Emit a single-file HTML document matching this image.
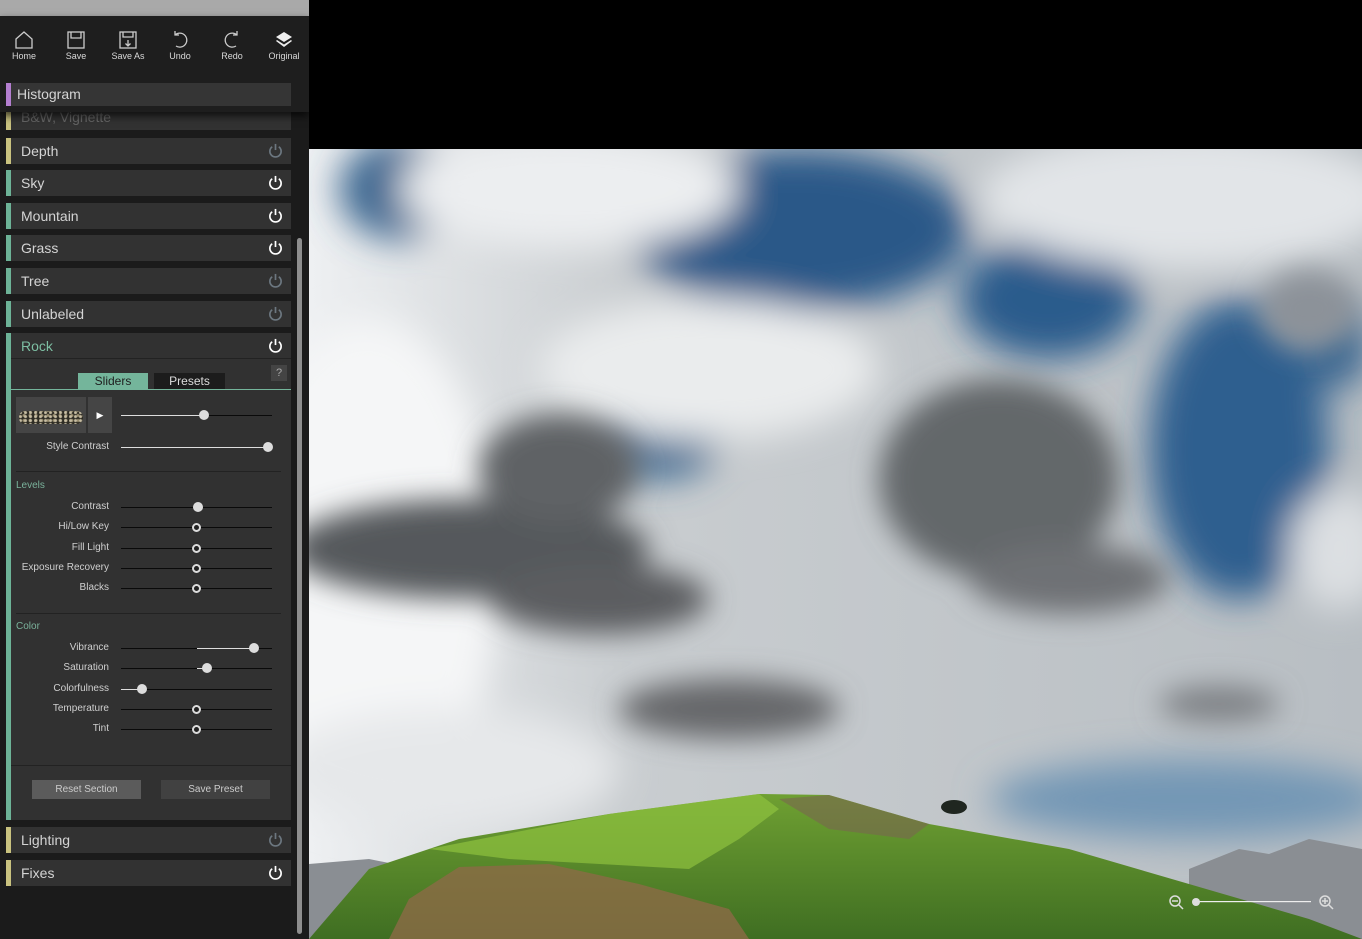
<!DOCTYPE html>
<html><head><meta charset="utf-8"><style>
*{margin:0;padding:0;box-sizing:border-box}
body{width:1362px;height:939px;background:#000;position:relative;overflow:hidden;font-family:"Liberation Sans",sans-serif}
.side{position:absolute;left:0;top:0;width:309px;height:939px;background:#1b1b1b}
.abs{position:absolute}
.row{position:absolute;left:6px;width:285px;height:26px;background:#323232}
.row .bar{position:absolute;left:0;top:0;width:5px;height:100%}
.row .t{position:absolute;left:15px;top:5px;font-size:14px;color:#d4d4d4}
.pw{position:absolute;right:8px;top:5px}
.y{background:#c9c27f}.g{background:#6db397}
.tb{position:absolute;top:30px;width:40px;text-align:center;font-size:9px;color:#d8d8d8}
.tb svg{display:block;margin:0 auto 1px}
.lab{position:absolute;right:200px;font-size:10px;color:#cfcfcf;text-align:right;white-space:nowrap}
.sl{position:absolute;left:121px;width:151px;height:1px;background:#0a0a0a}
.fill{position:absolute;height:1px;background:#ddd;top:0}
.kn{position:absolute;width:10px;height:10px;border-radius:50%;background:#ddd;top:-5px;margin-left:-5px}
.ko{position:absolute;width:9px;height:9px;border-radius:50%;background:#222;border:2px solid #ddd;top:-4px;margin-left:-4.5px}
.sep{position:absolute;height:1px;background:#222}
</style></head><body>
<div class="side">
<div class="abs" style="left:0;top:0;width:309px;height:16px;background:#a9a9a9"></div>

<div class="row" style="top:105px;height:25px"><div class="bar y"></div><div class="t" style="color:#666;top:4px">B&amp;W, Vignette</div></div>
<div class="abs" style="left:0;top:16px;width:309px;height:96px;background:#1e1e1e;box-shadow:0 4px 8px rgba(0,0,0,.7)"></div>

<div class="tb" style="left:4px"><svg width="20" height="20" viewBox="0 0 20 20" fill="none" stroke="#ccc" stroke-width="1.3"><path d="M2 9 L10 2 L18 9 V18 H2 Z"/></svg>Home</div>
<div class="tb" style="left:56px"><svg width="20" height="20" viewBox="0 0 20 20" fill="none" stroke="#ccc" stroke-width="1.3"><rect x="2" y="2" width="16" height="16"/><path d="M5 2 V8 H15 V2"/></svg>Save</div>
<div class="tb" style="left:108px"><svg width="20" height="20" viewBox="0 0 20 20" fill="none" stroke="#ccc" stroke-width="1.3"><rect x="2" y="2" width="16" height="16"/><path d="M5 2 V7 H15 V2 M10 10 V16 M7.5 13.5 L10 16 L12.5 13.5"/></svg>Save As</div>
<div class="tb" style="left:160px"><svg width="20" height="20" viewBox="0 0 20 20" fill="none" stroke="#ccc" stroke-width="1.3"><path d="M5 5 A7 7 0 1 1 6 16 M5 1 V5 H9"/></svg>Undo</div>
<div class="tb" style="left:212px"><svg width="20" height="20" viewBox="0 0 20 20" fill="none" stroke="#ccc" stroke-width="1.3"><path d="M15 5 A7 7 0 1 0 14 16 M15 1 V5 H11"/></svg>Redo</div>
<div class="tb" style="left:264px"><svg width="20" height="20" viewBox="0 0 20 20"><path d="M10 2 L18 7 L10 12 L2 7 Z" fill="#eee"/><path d="M3 10 L10 14.5 L17 10 L18 11 L10 17 L2 11 Z" fill="#eee"/></svg>Original</div>

<div class="row" style="top:83px;height:23px;background:#353535"><div class="bar" style="background:#b47fd0"></div><div class="t" style="left:11px;top:3px">Histogram</div></div>

<svg width="0" height="0" style="position:absolute"><defs>
<symbol id="pw" viewBox="0 0 16 16"><path d="M4.5 4 A6 6 0 1 0 11.5 4" fill="none" stroke="currentColor" stroke-width="1.8"/><path d="M8 1 V7.5" stroke="currentColor" stroke-width="1.8"/></symbol></defs></svg>

<div class="row" style="top:138px"><div class="bar y"></div><div class="t">Depth</div><svg class="pw" width="15" height="15" style="color:#6c7780"><use href="#pw"/></svg></div>
<div class="row" style="top:170px"><div class="bar g"></div><div class="t">Sky</div><svg class="pw" width="15" height="15" style="color:#fff"><use href="#pw"/></svg></div>
<div class="row" style="top:203px"><div class="bar g"></div><div class="t">Mountain</div><svg class="pw" width="15" height="15" style="color:#fff"><use href="#pw"/></svg></div>
<div class="row" style="top:235px"><div class="bar g"></div><div class="t">Grass</div><svg class="pw" width="15" height="15" style="color:#fff"><use href="#pw"/></svg></div>
<div class="row" style="top:268px"><div class="bar g"></div><div class="t">Tree</div><svg class="pw" width="15" height="15" style="color:#6c7780"><use href="#pw"/></svg></div>
<div class="row" style="top:301px"><div class="bar g"></div><div class="t">Unlabeled</div><svg class="pw" width="15" height="15" style="color:#6c7780"><use href="#pw"/></svg></div>

<div class="row" style="top:333px;height:487px;background:#313131"><div class="bar g"></div>
<div class="t" style="color:#7dbfa3">Rock</div><svg class="pw" width="15" height="15" style="color:#fff"><use href="#pw"/></svg>
<div class="sep" style="left:5px;top:25px;width:280px;background:#222"></div>
<div class="abs" style="left:265px;top:32px;width:16px;height:16px;background:#444;color:#aaa;font-size:11px;text-align:center;line-height:16px">?</div>
<div class="abs" style="left:72px;top:40px;width:70px;height:16px;background:#74b59b;color:#1e1e1e;font-size:12px;text-align:center;line-height:16px">Sliders</div>
<div class="abs" style="left:148px;top:40px;width:71px;height:16px;background:#1c1c1c;color:#ddd;font-size:12px;text-align:center;line-height:16px">Presets</div>
<div class="abs" style="left:5px;top:56px;width:280px;height:1px;background:#74b59b"></div>
</div>
<div class="abs" style="left:16px;top:397px;width:70px;height:36px;background:#454545"></div>
<div class="abs" style="left:19px;top:411px;width:64px;height:13px;border-radius:6px;background:radial-gradient(circle at 30% 40%,#c8bea4 0 1px,transparent 2px) 0 0/5px 4px,radial-gradient(circle,#9b8f70 0 1px,transparent 2px) 2px 2px/6px 5px,#2e2c24"></div>
<div class="abs" style="left:88px;top:397px;width:24px;height:36px;background:#454545;color:#fff;font-size:9px;text-align:center;line-height:36px">▶</div>
<div class="sl" style="top:415px"><div class="fill" style="left:0;width:83px"></div><div class="kn" style="left:83px"></div></div>
<div class="lab" style="top:441px">Style Contrast</div>
<div class="sl" style="top:447px;background:#ddd"><div class="kn" style="left:147px"></div></div>
<div class="sep" style="left:16px;top:471px;width:265px"></div>
<div class="abs" style="left:16px;top:480px;font-size:10px;color:#7ab29b">Levels</div>
<div class="lab" style="top:501px">Contrast</div><div class="sl" style="top:507px"><div class="kn" style="left:77px"></div></div>
<div class="lab" style="top:521px">Hi/Low Key</div><div class="sl" style="top:527px"><div class="ko" style="left:75px"></div></div>
<div class="lab" style="top:542px">Fill Light</div><div class="sl" style="top:548px"><div class="ko" style="left:75px"></div></div>
<div class="lab" style="top:562px">Exposure Recovery</div><div class="sl" style="top:568px"><div class="ko" style="left:75px"></div></div>
<div class="lab" style="top:582px">Blacks</div><div class="sl" style="top:588px"><div class="ko" style="left:75px"></div></div>
<div class="sep" style="left:16px;top:613px;width:265px"></div>
<div class="abs" style="left:16px;top:621px;font-size:10px;color:#7ab29b">Color</div>
<div class="lab" style="top:642px">Vibrance</div><div class="sl" style="top:648px"><div class="fill" style="left:76px;width:57px"></div><div class="kn" style="left:133px"></div></div>
<div class="lab" style="top:662px">Saturation</div><div class="sl" style="top:668px"><div class="fill" style="left:76px;width:10px"></div><div class="kn" style="left:86px"></div></div>
<div class="lab" style="top:683px">Colorfulness</div><div class="sl" style="top:689px"><div class="fill" style="left:0;width:21px"></div><div class="kn" style="left:21px"></div></div>
<div class="lab" style="top:703px">Temperature</div><div class="sl" style="top:709px"><div class="ko" style="left:75px"></div></div>
<div class="lab" style="top:723px">Tint</div><div class="sl" style="top:729px"><div class="ko" style="left:75px"></div></div>
<div class="sep" style="left:11px;top:765px;width:280px"></div>
<div class="abs" style="left:32px;top:780px;width:109px;height:19px;background:#5b5b5b;color:#ccc;font-size:10px;text-align:center;line-height:19px">Reset Section</div>
<div class="abs" style="left:161px;top:780px;width:109px;height:19px;background:#414141;color:#ccc;font-size:10px;text-align:center;line-height:19px">Save Preset</div>

<div class="row" style="top:827px"><div class="bar y"></div><div class="t">Lighting</div><svg class="pw" width="15" height="15" style="color:#6c7780"><use href="#pw"/></svg></div>
<div class="row" style="top:860px"><div class="bar y"></div><div class="t">Fixes</div><svg class="pw" width="15" height="15" style="color:#fff"><use href="#pw"/></svg></div>

<div class="abs" style="left:297px;top:238px;width:5px;height:696px;border-radius:3px;background:#8e8e8e"></div>
</div>

<svg class="abs" style="left:309px;top:149px" width="1053" height="790" viewBox="0 0 1053 790">
<defs>
<filter id="b1" x="-50%" y="-50%" width="200%" height="200%"><feGaussianBlur stdDeviation="18"/></filter>
<filter id="b2" x="-50%" y="-50%" width="200%" height="200%"><feGaussianBlur stdDeviation="14"/></filter>
<linearGradient id="base" x1="0" y1="0" x2="1" y2="0"><stop offset="0" stop-color="#eef0f2"/><stop offset=".3" stop-color="#c9cdd0"/><stop offset="1" stop-color="#b8bec3"/></linearGradient>
<linearGradient id="hill" x1="0" y1="0" x2="0" y2="1"><stop offset="0" stop-color="#6fa032"/><stop offset="1" stop-color="#3f6e22"/></linearGradient>
</defs>
<rect width="1053" height="790" fill="url(#base)"/>
<g filter="url(#b1)">
<!-- blue patches -->
<ellipse cx="490" cy="80" rx="170" ry="80" fill="#2a5888"/>
<ellipse cx="90" cy="40" rx="60" ry="50" fill="#3a6690"/>
<ellipse cx="740" cy="150" rx="90" ry="60" fill="#2b5b8c"/>
<ellipse cx="930" cy="300" rx="90" ry="150" fill="#2e5f8f"/>
<ellipse cx="350" cy="290" rx="60" ry="40" fill="#3c6a92"/>
<ellipse cx="880" cy="650" rx="200" ry="40" fill="#7397b5"/>
<ellipse cx="1030" cy="200" rx="30" ry="40" fill="#3a6690"/>
<!-- white clouds -->
<ellipse cx="260" cy="40" rx="170" ry="60" fill="#eceef0"/>
<ellipse cx="880" cy="50" rx="210" ry="70" fill="#e2e5e8"/>
<ellipse cx="60" cy="420" rx="130" ry="250" fill="#f5f6f7"/>
<ellipse cx="400" cy="220" rx="170" ry="70" fill="#eaeced"/>
<ellipse cx="1030" cy="400" rx="50" ry="60" fill="#dcdfe2"/>
<ellipse cx="140" cy="620" rx="170" ry="60" fill="#e6e8ea"/>
</g>
<g filter="url(#b2)">
<ellipse cx="160" cy="400" rx="180" ry="50" fill="#55585b"/>
<ellipse cx="250" cy="320" rx="80" ry="55" fill="#5f6265"/>
<ellipse cx="290" cy="450" rx="110" ry="35" fill="#5b5d60"/>
<ellipse cx="690" cy="330" rx="120" ry="100" fill="#64676b"/>
<ellipse cx="760" cy="430" rx="100" ry="35" fill="#6e7174"/>
<ellipse cx="420" cy="560" rx="110" ry="30" fill="#66686b"/>
<ellipse cx="910" cy="555" rx="60" ry="18" fill="#7d8084"/>
<ellipse cx="1000" cy="160" rx="50" ry="40" fill="#8c9299"/>
</g>
<path d="M880 720 L930 700 L960 705 L1000 690 L1053 700 L1053 790 L880 790Z" fill="#8a8e93"/>
<path d="M0 715 L60 710 L110 720 L0 790Z" fill="#8a8e93"/>
<path d="M0 790 L60 720 L150 690 L300 665 L450 645 L520 646 L620 675 L760 700 L880 735 L1000 770 L1053 790Z" fill="url(#hill)"/>
<path d="M120 700 L300 665 L450 645 L470 660 L430 690 L380 720 L200 710Z" fill="#8fc23e" opacity=".7"/>
<path d="M100 750 L150 718 L240 715 L330 735 L420 760 L440 790 L80 790Z" fill="#8c6a46" opacity=".8"/>
<path d="M470 650 L520 646 L620 675 L600 690 L520 680Z" fill="#7a6650" opacity=".6"/>
<ellipse cx="645" cy="658" rx="13" ry="7" fill="#1f2620"/>
<g fill="none" stroke="#ddd" stroke-width="1.5">
<circle cx="866" cy="752" r="5"/><path d="M863 752 H869 M870 756 L874 760"/>
<circle cx="1016" cy="752" r="5"/><path d="M1013 752 H1019 M1016 749 V755 M1020 756 L1024 760"/>
</g>
<rect x="887" y="752" width="115" height="1.2" fill="#eee"/>
<circle cx="887" cy="753" r="4" fill="#ddd"/>
</svg>
</body></html>
